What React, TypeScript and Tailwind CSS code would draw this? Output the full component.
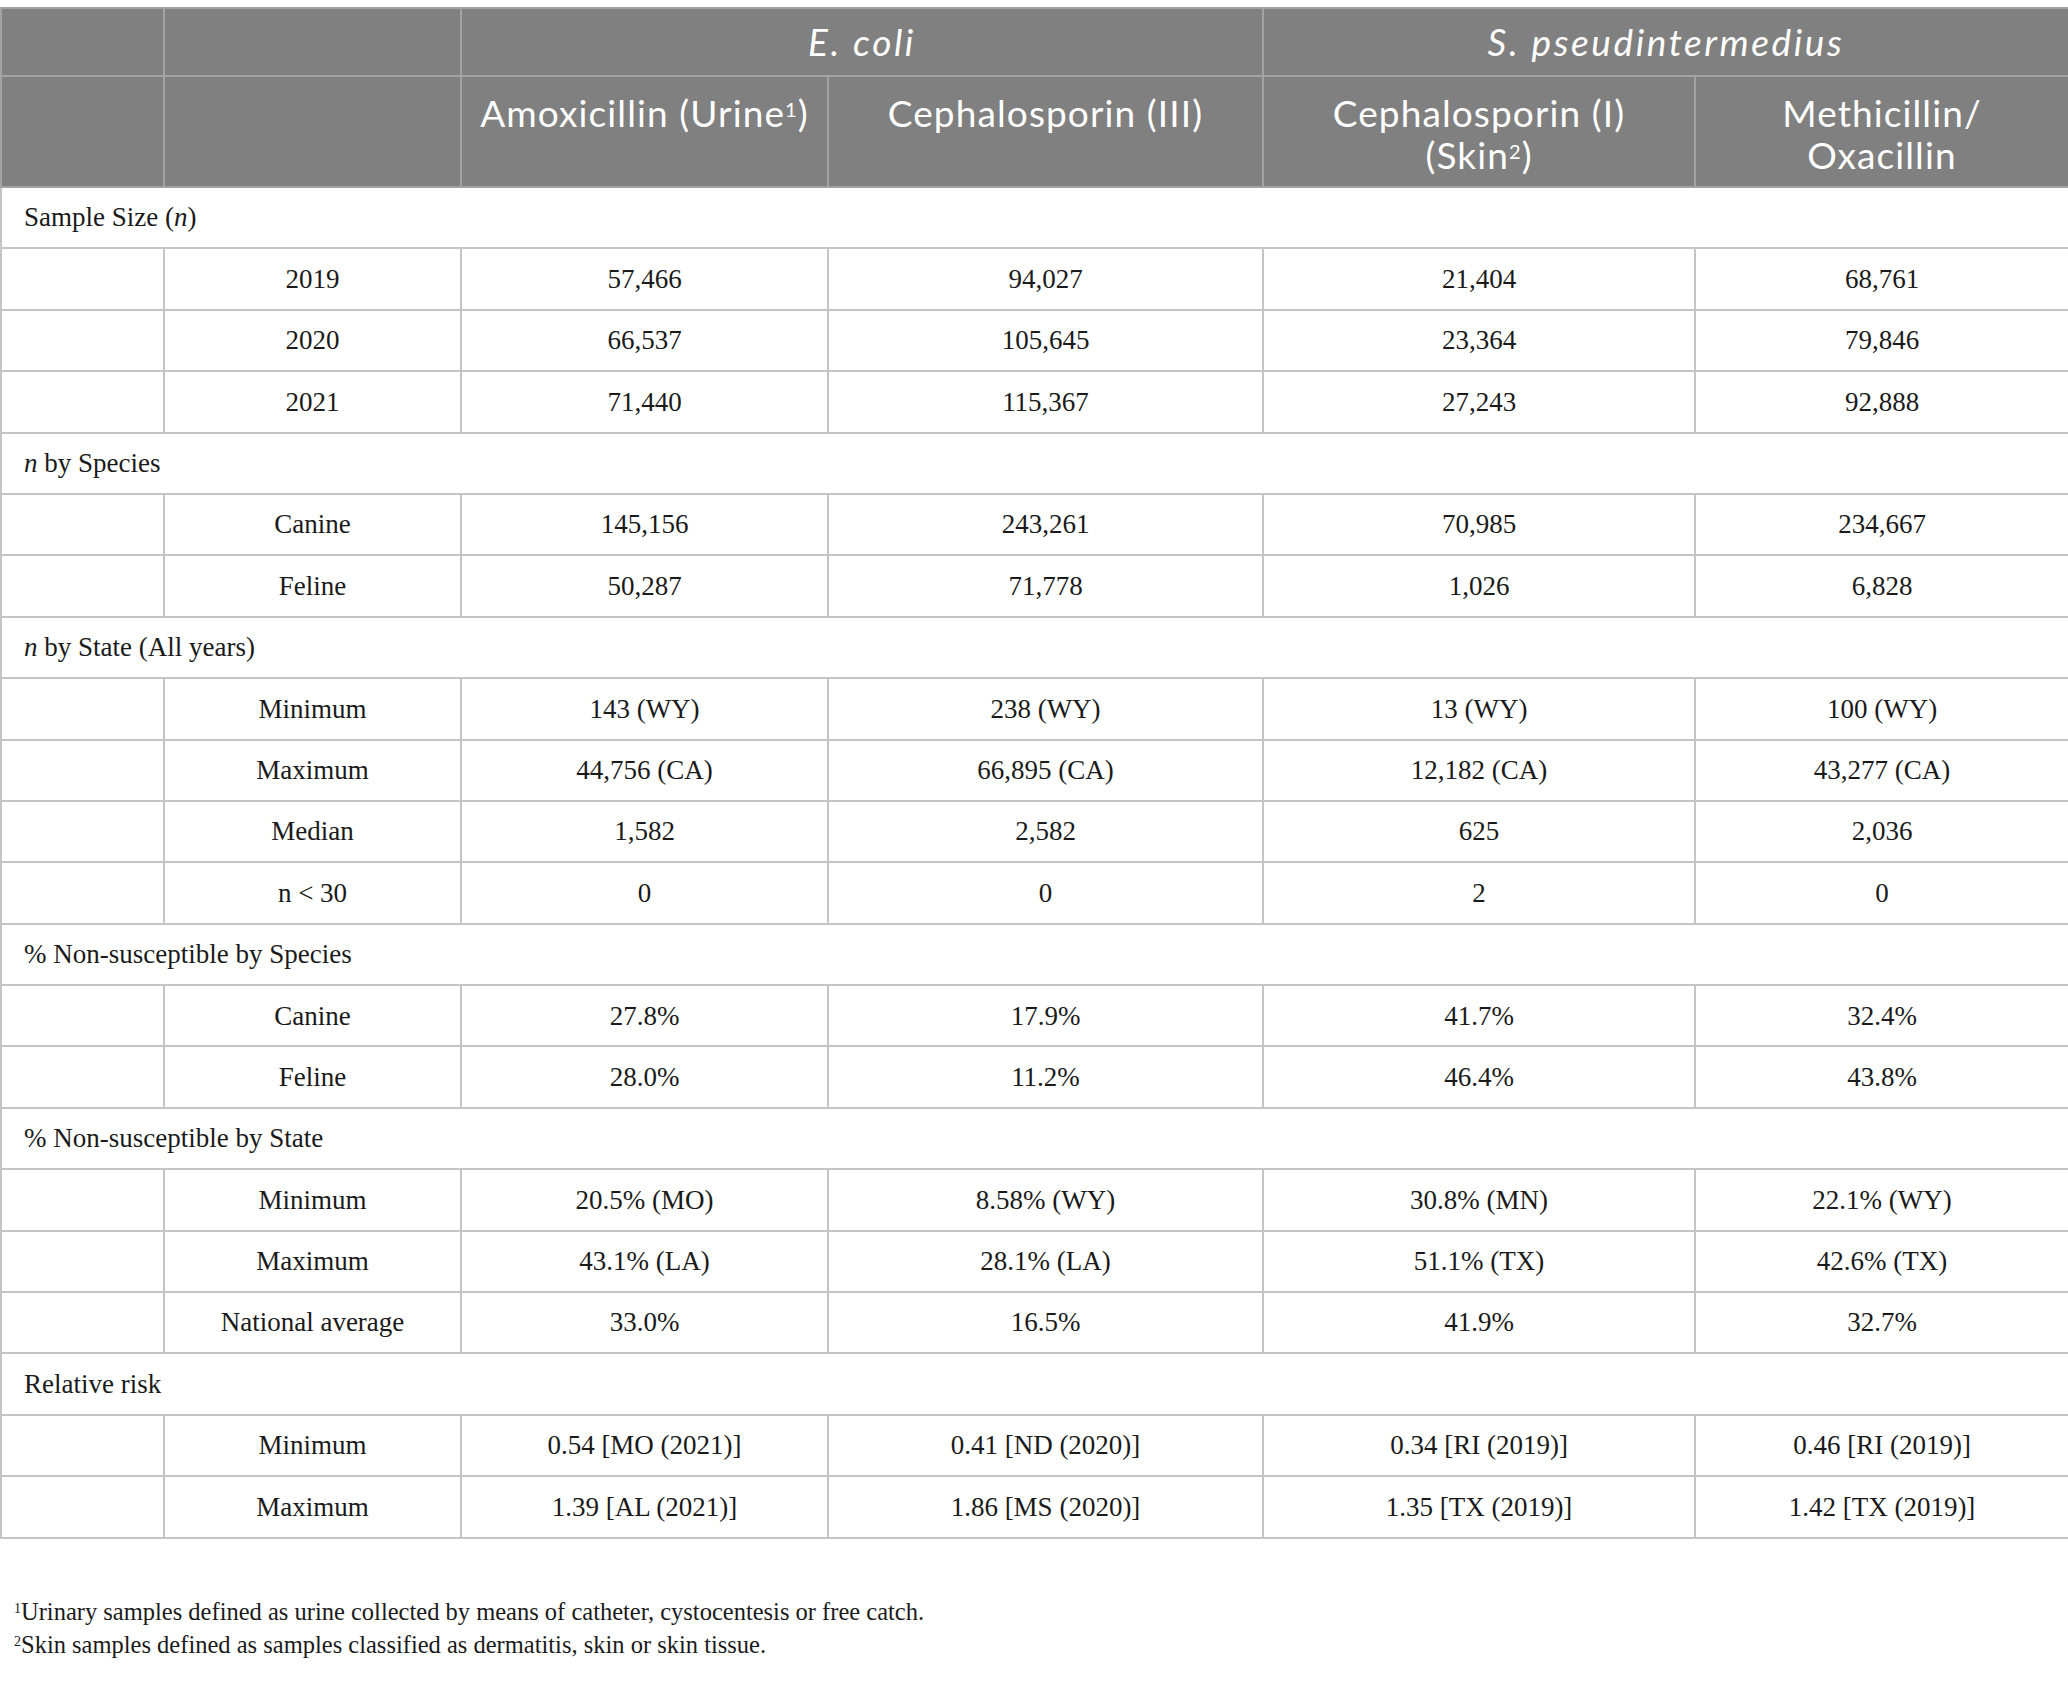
import React from "react";

type Row =
  | { kind: "section"; label: React.ReactNode }
  | { kind: "data"; label: React.ReactNode; values: string[] };

const ROWS: Row[] = [
  { kind: "section", label: <>Sample Size (<i>n</i>)</> },
  { kind: "data", label: "2019", values: ["57,466", "94,027", "21,404", "68,761"] },
  { kind: "data", label: "2020", values: ["66,537", "105,645", "23,364", "79,846"] },
  { kind: "data", label: "2021", values: ["71,440", "115,367", "27,243", "92,888"] },
  { kind: "section", label: <><i>n</i> by Species</> },
  { kind: "data", label: "Canine", values: ["145,156", "243,261", "70,985", "234,667"] },
  { kind: "data", label: "Feline", values: ["50,287", "71,778", "1,026", "6,828"] },
  { kind: "section", label: <><i>n</i> by State (All years)</> },
  { kind: "data", label: "Minimum", values: ["143 (WY)", "238 (WY)", "13 (WY)", "100 (WY)"] },
  { kind: "data", label: "Maximum", values: ["44,756 (CA)", "66,895 (CA)", "12,182 (CA)", "43,277 (CA)"] },
  { kind: "data", label: "Median", values: ["1,582", "2,582", "625", "2,036"] },
  { kind: "data", label: "n < 30", values: ["0", "0", "2", "0"] },
  { kind: "section", label: "% Non-susceptible by Species" },
  { kind: "data", label: "Canine", values: ["27.8%", "17.9%", "41.7%", "32.4%"] },
  { kind: "data", label: "Feline", values: ["28.0%", "11.2%", "46.4%", "43.8%"] },
  { kind: "section", label: "% Non-susceptible by State" },
  { kind: "data", label: "Minimum", values: ["20.5% (MO)", "8.58% (WY)", "30.8% (MN)", "22.1% (WY)"] },
  { kind: "data", label: "Maximum", values: ["43.1% (LA)", "28.1% (LA)", "51.1% (TX)", "42.6% (TX)"] },
  { kind: "data", label: "National average", values: ["33.0%", "16.5%", "41.9%", "32.7%"] },
  { kind: "section", label: "Relative risk" },
  { kind: "data", label: "Minimum", values: ["0.54 [MO (2021)]", "0.41 [ND (2020)]", "0.34 [RI (2019)]", "0.46 [RI (2019)]"] },
  { kind: "data", label: "Maximum", values: ["1.39 [AL (2021)]", "1.86 [MS (2020)]", "1.35 [TX (2019)]", "1.42 [TX (2019)]"] },
];

const HEAD = "border-2 border-[#a3a3a3] bg-[#808080] text-white font-normal";
const SUB = `${HEAD} px-2 pt-[15px] align-top tracking-[0.03em]`;
const CELL = "border-2 border-[#c4c4c4] h-[61.4px] p-0 text-center align-middle";

export default function App() {
  return (
    <div className="min-h-screen bg-white pt-[7px] font-['Liberation_Serif',serif] text-[27px] text-[#1a1a1a]">
      <table className="w-[2068px] table-fixed border-collapse">
        <colgroup>
          <col className="w-[163px]" />
          <col className="w-[297px]" />
          <col className="w-[367px]" />
          <col className="w-[435px]" />
          <col className="w-[432px]" />
          <col className="w-[374px]" />
        </colgroup>
        <thead className="font-['Lato',sans-serif] text-[37px] leading-[42px]">
          <tr className="h-[68px]">
            <th className={HEAD} />
            <th className={HEAD} />
            <th colSpan={2} className={`${HEAD} italic tracking-[0.07em]`}>
              E. coli
            </th>
            <th colSpan={2} className={`${HEAD} italic tracking-[0.07em]`}>
              S. pseudintermedius
            </th>
          </tr>
          <tr className="h-[111px]">
            <th className={HEAD} />
            <th className={HEAD} />
            <th className={SUB}>
              Amoxicillin (Urine<sup className="text-[20px]">1</sup>)
            </th>
            <th className={SUB}>Cephalosporin (III)</th>
            <th className={SUB}>
              Cephalosporin (I)
              <br />
              (Skin<sup className="text-[20px]">2</sup>)
            </th>
            <th className={SUB}>
              Methicillin/
              <br />
              Oxacillin
            </th>
          </tr>
        </thead>
        <tbody>
          {ROWS.map((row, i) =>
            row.kind === "section" ? (
              <tr key={i}>
                <td colSpan={6} className={`${CELL} pl-[22px] text-left`}>
                  {row.label}
                </td>
              </tr>
            ) : (
              <tr key={i}>
                <td className={CELL} />
                <td className={CELL}>{row.label}</td>
                {row.values.map((v, j) => (
                  <td key={j} className={CELL}>
                    {v}
                  </td>
                ))}
              </tr>
            ),
          )}
        </tbody>
      </table>
      <div className="mt-[56px] pl-[14px] text-[24.5px] leading-[33px]">
        <p>
          <sup className="text-[14px]">1</sup>Urinary samples defined as urine collected by means of catheter,
          cystocentesis or free catch.
        </p>
        <p>
          <sup className="text-[14px]">2</sup>Skin samples defined as samples classified as dermatitis, skin or
          skin tissue.
        </p>
      </div>
    </div>
  );
}
